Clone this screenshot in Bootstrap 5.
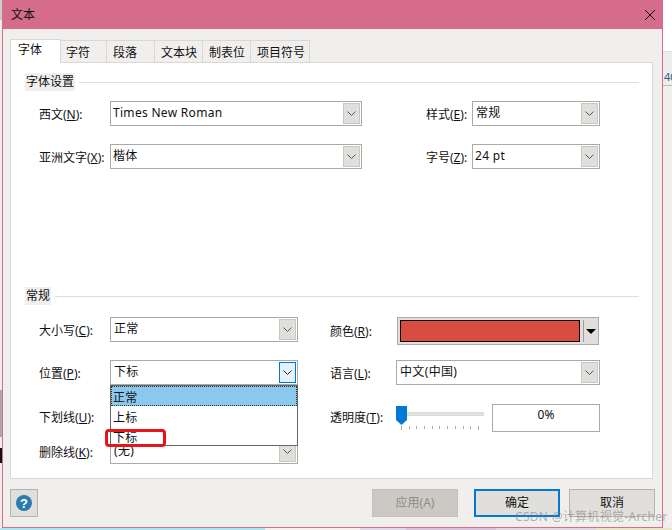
<!DOCTYPE html>
<html lang="zh-CN">
<head>
<meta charset="utf-8">
<title>文本</title>
<link href="https://cdn.jsdelivr.net/npm/bootstrap@5.3.0/dist/css/bootstrap.min.css" rel="stylesheet">
<style>
html,body{width:672px;height:530px;overflow:hidden;margin:0;background:#f0efed;}
body{font-family:"Noto Sans","Noto Sans CJK SC",sans-serif;font-size:12px;line-height:16px;color:#111;}
.stage{height:528px;}
.edge-l{width:2px;background:#e9e8e6;display:flex;flex-direction:column;flex:none;}
.edge-l i{display:block;flex:none;}
.e1{height:20px;background:#cfcdc8}.e2{height:370px;background:#efeeec}.e3{height:47px;background:#aaa}.e4{height:11px;background:#efeeec}.e5{height:15px;background:#111}.e6{height:65px;background:#efeeec}
.dlg{width:661px;flex:none;border:1px solid #d66c8e;border-top:0;background:#f0efed;display:flex;flex-direction:column;}
.ttl{height:29px;background:#d56c8c;flex:none;padding-left:8px;}
.ttl span{font-size:12px;line-height:28px;}
.ttl svg{margin-right:6px;margin-top:1px}
.tabstrip{margin:9px 0 0 7px;height:24px;border:0;flex-wrap:nowrap;align-items:flex-end;}
.tabstrip .nav-link{height:22px;padding:3px 0 0 6px;text-align:left;border:1px solid #d9d8d3;border-bottom:0;border-left:0;border-radius:0;color:#111;font-size:12px;line-height:18px;background:#f0efed;margin:0;}
.tabstrip .nav-link.tight{padding-left:5px;}
.tabstrip .nav-link.active{height:24px;background:#fff;color:#111;border:1px solid #d9d8d3;border-bottom:0;border-radius:0;line-height:18px;padding:1px 0 0 7px;margin-bottom:0;position:relative;z-index:1;top:1px;}
.w51{width:51px}.w46{width:46px}.w48{width:48px}.w59{width:59px}
.panel{margin:0 9px 0 7px;height:417px;background:#fff;border:1px solid #d9d8d3;padding-top:10px;flex:none;}
.grp{height:18px;margin:0 13px 0 14px;}
.grp b{font-weight:400;background:#f0efed;padding:0 1px;line-height:18px;flex:none;}
.grp u{flex:1;height:1px;background:#d6e0e6;margin-left:4px;display:block;}
.frow{height:25px;padding-left:28px;display:flex;align-items:center;}
.sp10{margin-top:10px}.sp12{margin-top:12px}.sp19{margin-top:19px}.mt18{margin-top:18px}.mt-sec{margin-top:118px}
.lab{flex:none;padding-top:3px;white-space:nowrap;}
.la{width:71px}.lb{width:46px;margin-left:64px}.lc{width:67px;margin-left:32px}.ld{width:66px;margin-left:32px}
.lc.lo{padding-top:5px}
.lab span{text-decoration:underline;text-underline-offset:1px}
.combo{height:25px;border:1px solid #aaa;background:#fff;position:relative;flex:none;padding:2px 0 0 3px;line-height:17px;letter-spacing:.35px;}
.latin{letter-spacing:.3px;padding-left:2px;}
.nudge{padding-left:2px}
.caret{position:absolute;top:1px;bottom:1px;right:1px;width:17px;background:#e1dfdb;border:1px solid #c9c7c2;display:flex;align-items:center;justify-content:center;}
.caret.on{background:#e5f1fb;border-color:#0078d7;}
.w252{width:252px}.w128{width:128px}.w188{width:188px}.w204{width:204px}
.colorbox{width:202px;height:28px;border:1px solid #aaa;background:#e1dfdb;flex:none;display:flex;align-items:center;padding-left:2px;align-self:flex-start;}
.swatch{width:180px;height:22px;background:#d94c40;border:1px solid #000;flex:none;}
.sep{width:1px;height:22px;background:#9e9d9a;margin-left:3px;flex:none;}
.tri{width:0;height:0;border-left:5px solid transparent;border-right:5px solid transparent;border-top:5px solid #000;margin-left:2px;}
.listbox{position:absolute;left:-1px;top:24px;width:188px;height:61px;background:#fff;border:1px solid #666;z-index:5;}
.opt{height:20px;padding-left:2px;line-height:23px;letter-spacing:.35px;}
.opt.sel{background:#8bc8ee;border:1px dotted #333;padding-left:1px;line-height:21px;}
.redmark{position:absolute;left:-6px;top:68px;width:61px;height:18px;border:3px solid #e8141a;border-radius:4px;z-index:6;}
.slider{width:88px;height:27px;position:relative;flex:none;margin-left:-1px;}
.track{position:absolute;left:0;right:0;top:9px;height:4px;background:#e3e2de;border:1px solid #dcdbd7;}
.thumb{position:absolute;left:0;top:3px;}
.ticks{position:absolute;left:5px;top:23px;width:78px;height:4px;display:flex;justify-content:space-between;}
.ticks i{width:1px;height:3px;background:#aaa;display:block;}
.ticks i:first-child,.ticks i:last-child{height:4px}
.pct{width:108px;height:28px;border:1px solid #aaa;background:#fff;text-align:center;line-height:20px;margin-left:8px;flex:none;align-self:flex-start;}
.foot{padding:10px 7px 0 7px;position:relative;flex:1;}
.foot .btn{width:86px;height:28px;padding:0;border-radius:0;background:#e1dfdb;border:1px solid #b5b3ae;color:#111;font-size:12px;line-height:26px;}
.foot .btn.helpb{width:28px;display:flex;align-items:center;justify-content:center;}
.foot .btn.off{background:#ccc9c4;color:#8e8c88;border-color:#c4c1bc;opacity:1;margin-left:334px;}
.foot .btn.def{border:2px solid #0078d7;line-height:24px;}
.gap-16{margin-left:16px}.gap-9{margin-left:9px}
.mark-w{position:absolute;left:512px;top:30px;font-size:12px;line-height:16px;letter-spacing:.3px;color:rgba(120,120,120,.55);white-space:nowrap;z-index:9;}
.edge-r{flex:1;display:flex;flex-direction:column;overflow:hidden;background:#f0efed;}
.r1{height:52px;background:#fff;border-bottom:1px solid #ddd;flex:none;}
.r2{height:34px;background:#eeedeb;border-bottom:1px solid #bbb;flex:none;font-size:11px;line-height:14px;padding:18px 0 0 1px;color:#26607f;white-space:nowrap;}
.strip{height:2px;}
.strip i{display:block;height:2px;flex:none;}
.s1{width:265px;background:#a7e6ee}.s2{width:95px;background:#f3f1ee}.s3{width:46px;background:#ded9e8}.s4{width:90px;background:#d9c3dc}.s5{width:100px;background:#e0d8e0}.s6{width:76px;background:#e9e6c8}
</style>
</head>
<body>
<div class="stage d-flex">
  <div class="edge-l"><i class="e1"></i><i class="e2"></i><i class="e3"></i><i class="e4"></i><i class="e5"></i><i class="e6"></i></div>
  <div class="dlg">
    <div class="ttl d-flex justify-content-between align-items-center">
      <span>文本</span>
      <svg width="12" height="12" viewBox="0 0 12 12" aria-label="关闭"><path d="M1 1l10 10M11 1L1 11" stroke="#111" stroke-width="1" fill="none"/></svg>
    </div>
    <ul class="nav nav-tabs tabstrip">
      <li class="nav-item"><a class="nav-link active w51">字体</a></li>
      <li class="nav-item"><a class="nav-link tight w46">字符</a></li>
      <li class="nav-item"><a class="nav-link w48">段落</a></li>
      <li class="nav-item"><a class="nav-link w48">文本块</a></li>
      <li class="nav-item"><a class="nav-link w48">制表位</a></li>
      <li class="nav-item"><a class="nav-link w59">项目符号</a></li>
    </ul>
    <div class="panel">
      <div class="grp d-flex align-items-center"><b>字体设置</b><u></u></div>
      <div class="frow sp10">
        <div class="lab la">西文(<span>N</span>):</div>
        <div class="combo w252 latin">Times New Roman<div class="caret"><svg width="9" height="5" viewBox="0 0 9 5"><path d="M.5.5l4 4 4-4" stroke="#555" fill="none"/></svg></div></div>
        <div class="lab lb">样式(<span>E</span>):</div>
        <div class="combo w128">常规<div class="caret"><svg width="9" height="5" viewBox="0 0 9 5"><path d="M.5.5l4 4 4-4" stroke="#555" fill="none"/></svg></div></div>
      </div>
      <div class="frow mt18">
        <div class="lab la">亚洲文字(<span>X</span>):</div>
        <div class="combo w252 nudge">楷体<div class="caret"><svg width="9" height="5" viewBox="0 0 9 5"><path d="M.5.5l4 4 4-4" stroke="#555" fill="none"/></svg></div></div>
        <div class="lab lb">字号(<span>Z</span>):</div>
        <div class="combo w128 latin">24 pt<div class="caret"><svg width="9" height="5" viewBox="0 0 9 5"><path d="M.5.5l4 4 4-4" stroke="#555" fill="none"/></svg></div></div>
      </div>
      <div class="grp d-flex align-items-center mt-sec"><b>常规</b><u></u></div>
      <div class="frow sp12">
        <div class="lab la">大小写(<span>C</span>):</div>
        <div class="combo w188">正常<div class="caret"><svg width="9" height="5" viewBox="0 0 9 5"><path d="M.5.5l4 4 4-4" stroke="#555" fill="none"/></svg></div></div>
        <div class="lab lc lo">颜色(<span>R</span>):</div>
        <div class="colorbox"><div class="swatch"></div><div class="sep"></div><div class="tri"></div></div>
      </div>
      <div class="frow mt18">
        <div class="lab la">位置(<span>P</span>):</div>
        <div class="combo w188">下标<div class="caret on"><svg width="9" height="5" viewBox="0 0 9 5"><path d="M.5.5l4 4 4-4" stroke="#222" fill="none"/></svg></div>
          <div class="listbox"><div class="opt sel">正常</div><div class="opt">上标</div><div class="opt">下标</div></div>
          <div class="redmark"></div>
        </div>
        <div class="lab ld">语言(<span>L</span>):</div>
        <div class="combo w204">中文(中国)<div class="caret"><svg width="9" height="5" viewBox="0 0 9 5"><path d="M.5.5l4 4 4-4" stroke="#555" fill="none"/></svg></div></div>
      </div>
      <div class="frow sp19">
        <div class="lab la">下划线(<span>U</span>):</div>
        <div class="combo w188"><div class="caret"><svg width="9" height="5" viewBox="0 0 9 5"><path d="M.5.5l4 4 4-4" stroke="#555" fill="none"/></svg></div></div>
        <div class="lab lc">透明度(<span>T</span>):</div>
        <div class="slider">
          <div class="track"></div>
          <svg class="thumb" width="11" height="19" viewBox="0 0 11 19"><path d="M0 0h11v14l-5.500 5L0 14z" fill="#0078d7"/></svg>
          <div class="ticks"><i></i><i></i><i></i><i></i><i></i><i></i><i></i><i></i><i></i><i></i><i></i></div>
        </div>
        <div class="pct">0%</div>
      </div>
      <div class="frow sp10">
        <div class="lab la">删除线(<span>K</span>):</div>
        <div class="combo w188">(无)<div class="caret"><svg width="9" height="5" viewBox="0 0 9 5"><path d="M.5.5l4 4 4-4" stroke="#555" fill="none"/></svg></div></div>
      </div>
    </div>
    <div class="foot d-flex">
      <button class="btn helpb" aria-label="帮助"><svg width="16" height="16" viewBox="0 0 16 16"><circle cx="8" cy="8" r="8" fill="#2b7bb0"/><text x="8" y="12.500" text-anchor="middle" font-family="Liberation Sans" font-weight="700" font-size="13" fill="#fff">?</text></svg></button>
      <button class="btn off">应用(A)</button>
      <button class="btn def gap-16">确定</button>
      <button class="btn gap-9">取消</button>
      <div class="mark-w">CSDN @计算机视觉-Archer</div>
    </div>
  </div>
  <div class="edge-r"><div class="r1"></div><div class="r2">40</div></div>
</div>
<div class="strip d-flex"><i class="s1"></i><i class="s2"></i><i class="s3"></i><i class="s4"></i><i class="s5"></i><i class="s6"></i></div>
</body>
</html>
